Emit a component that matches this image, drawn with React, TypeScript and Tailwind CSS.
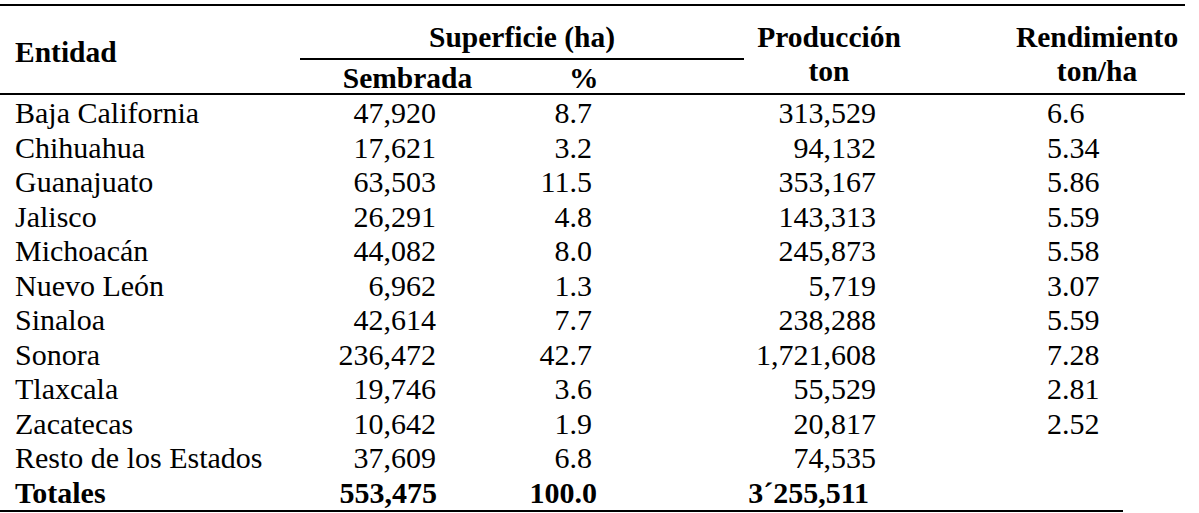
const filas: [string, string, string, string, string][] = [
  ['Baja California', '47,920', '8.7', '313,529', '6.6'],
  ['Chihuahua', '17,621', '3.2', '94,132', '5.34'],
  ['Guanajuato', '63,503', '11.5', '353,167', '5.86'],
  ['Jalisco', '26,291', '4.8', '143,313', '5.59'],
  ['Michoacán', '44,082', '8.0', '245,873', '5.58'],
  ['Nuevo León', '6,962', '1.3', '5,719', '3.07'],
  ['Sinaloa', '42,614', '7.7', '238,288', '5.59'],
  ['Sonora', '236,472', '42.7', '1,721,608', '7.28'],
  ['Tlaxcala', '19,746', '3.6', '55,529', '2.81'],
  ['Zacatecas', '10,642', '1.9', '20,817', '2.52'],
  ['Resto de los Estados', '37,609', '6.8', '74,535', ''],
];

export default function App() {
  return (
    <div className="w-[1199px] h-[513px] bg-white text-black overflow-hidden [font-family:'Liberation_Serif']">
      <div className="w-[1185px] mt-[4px] border-t-2 border-b-2 border-black">
        {/* Encabezado */}
        <div className="flex h-[87px] font-bold text-[29.5px]">
          <div className="w-[300px] flex items-center pl-[15px] pt-[5px]">Entidad</div>
          <div className="w-[444px] flex flex-col">
            <div className="h-[54px] border-b-2 border-black pt-[14px] leading-[34px] text-center">Superficie (ha)</div>
            <div className="flex h-[33px] leading-[33px] pt-[2px]">
              <div className="w-[215px] text-center">Sembrada</div>
              <div className="w-[229px] pl-[54px]">%</div>
            </div>
          </div>
          <div className="w-[265px]">
            <div className="w-[170px] text-center pt-[14px] leading-[34px]">
              <div>Producción</div>
              <div>ton</div>
            </div>
          </div>
          <div className="w-[176px] text-center pt-[14px] leading-[34px]">
            <div>Rendimiento</div>
            <div>ton/ha</div>
          </div>
        </div>
      </div>

      {/* Filas */}
      <div className="pt-[1px] text-[30px]">
        {filas.map((f) => (
          <div key={f[0]} className="grid grid-cols-[300px_215px_229px_265px_176px] h-[34.5px] leading-[34.5px] whitespace-nowrap">
            <div className="pl-[15px]">{f[0]}</div>
            <div className="text-right pr-[79px]">{f[1]}</div>
            <div className="text-right pr-[152px]">{f[2]}</div>
            <div className="text-right pr-[133px]">{f[3]}</div>
            <div className="pl-[38px]">{f[4]}</div>
          </div>
        ))}
        <div className="grid grid-cols-[300px_215px_229px_265px_176px] h-[34.5px] leading-[34.5px] whitespace-nowrap font-bold">
          <div className="pl-[15px]">Totales</div>
          <div className="text-right pr-[78px]">553,475</div>
          <div className="text-right pr-[147px]">100.0</div>
          <div className="text-right pr-[140px]">3´255,511</div>
          <div />
        </div>
      </div>
      <div className="w-[1123px] h-[2px] bg-black" />
    </div>
  );
}
